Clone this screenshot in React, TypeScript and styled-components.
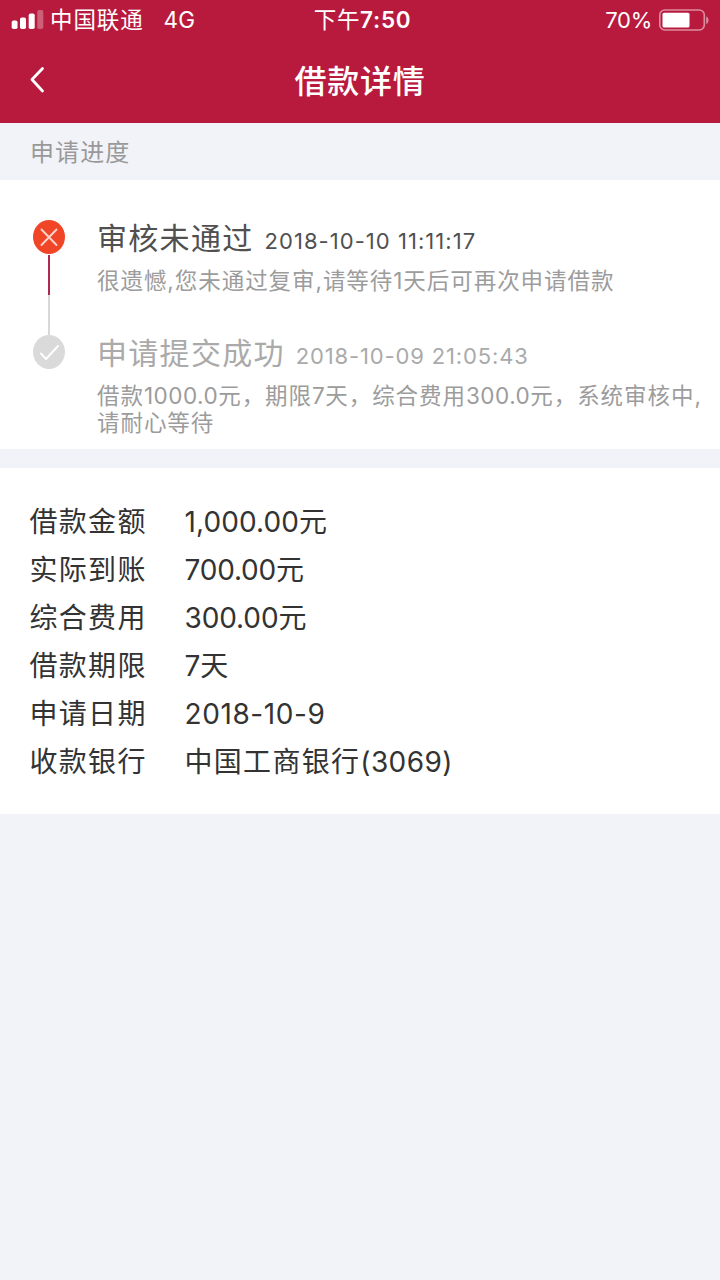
import React from "react";
import styled, { createGlobalStyle } from "styled-components";

const GlobalStyle = createGlobalStyle`
  *, *::before, *::after { box-sizing: border-box; }
  body {
    margin: 0;
    background: #f2f3f8;
    font-family: Inter, "Noto Sans CJK SC", sans-serif;
    font-weight: 400;
    font-feature-settings: "calt" 0;
  }
`;

const Screen = styled.main`
  display: flex;
  flex-direction: column;
  width: 720px;
  min-height: 1280px;
  background: #f2f3f8;
`;

const Header = styled.header`
  height: 123px;
  background: #b81a3e;
  color: #fff;
`;

const StatusBar = styled.div`
  display: grid;
  grid-template-columns: 1fr auto 1fr;
  align-items: center;
  height: 40px;
  padding: 0 11px;
  font-size: 22.5px;
  line-height: 40px;
  white-space: nowrap;
`;

const StatusGroup = styled.div<{ $end?: boolean }>`
  display: flex;
  align-items: center;
  justify-content: ${(p) => (p.$end ? "flex-end" : "flex-start")};
`;

const Signal = styled.svg`
  width: 33px;
  height: 20px;
`;

const Carrier = styled.span`
  margin-left: 6px;
  letter-spacing: 0.9px;
`;

const Network = styled.span`
  margin-left: 20px;
`;

const Clock = styled.time`
  padding-left: 5px;
  letter-spacing: 0.7px;

  b {
    font-weight: 600;
  }
`;

const BatteryLevel = styled.span`
  font-size: 22px;
  letter-spacing: -0.3px;
`;

const Battery = styled.svg`
  width: 50px;
  height: 22px;
  margin-left: 7px;
`;

const NavBar = styled.nav`
  display: grid;
  grid-template-columns: 80px 1fr 80px;
  align-items: start;
  height: 83px;
`;

const BackButton = styled.button`
  display: flex;
  width: 80px;
  height: 80px;
  padding: 26px 0 0 29px;
  border: 0;
  background: none;
  color: inherit;
`;

const Title = styled.h1`
  margin: 0;
  padding-top: 2px;
  font-size: 32px;
  font-weight: 500;
  line-height: 80px;
  letter-spacing: 0.8px;
  text-align: center;
`;

const SectionTitle = styled.h2`
  margin: 0;
  height: 57px;
  padding: 1px 0 0 30px;
  color: #999;
  font-size: 24px;
  font-weight: inherit;
  line-height: 57px;
  letter-spacing: 1.1px;
`;

const Card = styled.section<{ $padding: string }>`
  padding: ${(p) => p.$padding};
  background: #fff;
`;

const Step = styled.article<{ $height: string }>`
  display: flex;
  height: ${(p) => p.$height};
`;

const Track = styled.div`
  display: flex;
  flex-direction: column;
  align-items: center;
  width: 32px;
  margin-right: 32px;
`;

const Marker = styled.svg`
  width: 32px;
  height: 34px;
  margin-bottom: 1px;
`;

const Connector = styled.div<{ $color: string }>`
  width: 2px;
  height: 40px;
  background: ${(p) => p.$color};
`;

const StepHeading = styled.h3<{ $muted?: boolean }>`
  display: flex;
  align-items: baseline;
  margin: 1px 0 9px;
  color: ${(p) => (p.$muted ? "#aaa" : "#505050")};
  font-size: 30px;
  font-weight: inherit;
  line-height: 34px;
  letter-spacing: 1.3px;
  white-space: nowrap;
`;

const StepTime = styled.time<{ $spacing: string }>`
  margin-left: 11px;
  font-size: 22px;
  letter-spacing: ${(p) => p.$spacing};
`;

const StepText = styled.p`
  margin: 0;
  color: #9c9c9c;
  font-size: 22.5px;
  line-height: 27px;
  letter-spacing: 0.95px;
  white-space: nowrap;
`;

const Figure = styled.span<{ $spacing?: string }>`
  letter-spacing: ${(p) => p.$spacing ?? "0"};
`;

const Details = styled.dl`
  display: grid;
  grid-template-columns: 155px 1fr;
  grid-auto-rows: 48px;
  margin: 0;
  color: #333;
  font-size: 28px;
  line-height: 48px;
  letter-spacing: 1.3px;
`;

const Term = styled.dt``;

const Value = styled.dd`
  margin: 0;
`;

const Gap = styled.div`
  height: 19px;
`;

const details = [
  { label: "借款金额", figure: "1,000.00", unit: "元", spacing: "0.1px" },
  { label: "实际到账", figure: "700.00", unit: "元", spacing: "-0.2px" },
  { label: "综合费用", figure: "300.00", unit: "元", spacing: "-0.1px" },
  { label: "借款期限", figure: "7", unit: "天", spacing: "0" },
  { label: "申请日期", figure: "2018-10-9", spacing: "0.6px" },
  { label: "收款银行", bank: "中国工商银行", figure: "(3069)", spacing: "0.4px" },
];

export default function App() {
  return (
    <>
      <GlobalStyle />
      <Screen>
        <Header>
          <StatusBar>
            <StatusGroup>
              <Signal viewBox="0 0 33 20" fill="#fff">
                <rect x="0.7" y="10.5" width="5.8" height="8.5" rx="1.8" />
                <rect x="9" y="7.5" width="6" height="11.5" rx="1.8" />
                <rect x="17.7" y="3.5" width="6" height="15.5" rx="1.8" />
                <rect x="26.3" y="0" width="6" height="19" rx="1.8" opacity="0.3" />
              </Signal>
              <Carrier>中国联通</Carrier>
              <Network>4G</Network>
            </StatusGroup>
            <Clock>
              下午<b>7:50</b>
            </Clock>
            <StatusGroup $end>
              <BatteryLevel>70%</BatteryLevel>
              <Battery viewBox="0 0 50 22" fill="none">
                <rect x="0.8" y="1" width="44.5" height="20" rx="5" stroke="#fff" strokeOpacity="0.5" strokeWidth="1.6" />
                <rect x="3.5" y="3.8" width="27" height="14.6" rx="1.5" fill="#fff" />
                <path d="M47.2 7.5c3 1.2 3 6.300 0 7.500z" fill="#fff" fillOpacity="0.5" />
              </Battery>
            </StatusGroup>
          </StatusBar>
          <NavBar>
            <BackButton aria-label="返回">
              <svg width="17" height="27" viewBox="0 0 17 27" fill="none">
                <path d="M13.500 2.500L3 13.500l10.500 11.500" stroke="#fff" strokeWidth="2.800" strokeLinecap="round" strokeLinejoin="round" />
              </svg>
            </BackButton>
            <Title>借款详情</Title>
          </NavBar>
        </Header>

        <SectionTitle>申请进度</SectionTitle>

        <Card $padding="40px 0 0 33px">
          <Step $height="115px">
            <Track>
              <Marker viewBox="0 0 32 34">
                <ellipse cx="16" cy="17" rx="16" ry="17" fill="#f14528" />
                <path d="M8.500 9.500l15 15.500M23.500 9.500l-15 15.500" stroke="#fbd5cc" strokeWidth="1.900" strokeLinecap="round" />
              </Marker>
              <Connector $color="#b02950" />
              <Connector $color="#d8d8d8" />
            </Track>
            <div>
              <StepHeading>
                审核未通过
                <StepTime $spacing="1.05px">2018-10-10 11:11:17</StepTime>
              </StepHeading>
              <StepText>很遗憾,您未通过复审,请等待1天后可再次申请借款</StepText>
            </div>
          </Step>
          <Step $height="114px">
            <Track>
              <Marker viewBox="0 0 32 34">
                <ellipse cx="16" cy="17" rx="16" ry="17" fill="#dadada" />
                <path d="M8 18.500l5 5.500L25 11" fill="none" stroke="#fff" strokeWidth="1.900" strokeLinecap="round" strokeLinejoin="round" />
              </Marker>
            </Track>
            <div>
              <StepHeading $muted>
                申请提交成功
                <StepTime $spacing="0.85px">2018-10-09 21:05:43</StepTime>
              </StepHeading>
              <StepText>
                借款<Figure $spacing="0.5px">1000.0</Figure>元，期限
                <Figure $spacing="0.5px">7</Figure>天，综合费用
                <Figure $spacing="0.5px">300.0</Figure>元，系统审核中,
                <br />
                请耐心等待
              </StepText>
            </div>
          </Step>
        </Card>

        <Gap />

        <Card $padding="30px 30px 28px 29.5px">
          <Details>
            {details.map((row) => (
              <React.Fragment key={row.label}>
                <Term>{row.label}</Term>
                <Value>
                  {row.bank}
                  <Figure $spacing={row.spacing}>{row.figure}</Figure>
                  {row.unit}
                </Value>
              </React.Fragment>
            ))}
          </Details>
        </Card>
      </Screen>
    </>
  );
}
